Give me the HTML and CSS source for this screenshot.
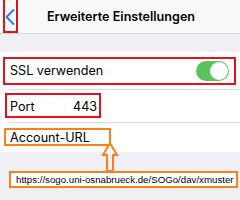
FILE: index.html
```html
<!DOCTYPE html>
<html lang="de">
<head>
<meta charset="utf-8">
<link rel="stylesheet" href="styles.css">
</head>
<body>
<div class="screen">
  <header class="nav">
    <span class="back">
      <svg width="10" height="16" viewBox="0 0 10 16"><path d="M8.5 1 L1.5 8 L8.5 15" fill="none" stroke="#157efb" stroke-width="1.8" stroke-linecap="round" stroke-linejoin="round"/></svg>
    </span>
    <h1 class="title">Erweiterte Einstellungen</h1>
  </header>
  <div class="gap"></div>
  <ul class="list">
    <li class="row row-ssl"><span class="label">SSL verwenden</span><span class="toggle"><span class="knob"></span></span></li>
    <li class="row row-port"><span class="label port-label">Port</span><span class="value">443</span></li>
    <li class="row row-url"><span class="label">Account-URL</span></li>
  </ul>

  <div class="mark mark-back"></div>
  <div class="mark mark-ssl"></div>
  <div class="mark mark-port"></div>
  <div class="mark mark-account"></div>
  <svg class="arrow" width="18" height="30" viewBox="0 0 18 30"><polygon points="9,1 16,13 12,13 12,29 6,29 6,13 2,13" fill="none" stroke="#f7821b" stroke-width="2" stroke-linejoin="miter"/></svg>
  <div class="urlbox">https://sogo.uni-osnabrueck.de/SOGo/dav/xmuster</div>
</div>
</body>
</html>
```
FILE: styles.css
```css
html, body {
  margin: 0;
  padding: 0;
}
body {
  background: #efeff4;
  font-family: Inter, "Liberation Sans", sans-serif;
  color: #000;
}
.screen {
  position: relative;
  width: 240px;
  height: 200px;
  overflow: hidden;
  background: #efeff4;
}
.nav {
  height: 33px;
  background: #f9f9f9;
  border-bottom: 1px solid #d6d6da;
  display: flex;
  align-items: center;
  position: relative;
}
.back {
  display: flex;
  align-items: center;
  padding-left: 5px;
  padding-top: 1px;
}
.title {
  margin: 0;
  position: absolute;
  left: 0;
  right: 0;
  text-align: center;
  font-size: 12.6px;
  font-weight: 600;
  letter-spacing: 0;
  padding-left: 2px;
}
.gap {
  height: 18px;
}
.list {
  list-style: none;
  margin: 0;
  padding: 0;
  background: #fff;
}
.row {
  display: flex;
  align-items: center;
  padding-left: 10px;
  font-size: 12.6px;
  position: relative;
}
.row-ssl {
  height: 37px;
  justify-content: space-between;
  padding-right: 11px;
}
.row-port {
  height: 32px;
}
.row-url {
  height: 29px;
}
.row-ssl::after,
.row-port::after {
  content: "";
  position: absolute;
  left: 9px;
  right: 0;
  bottom: -1px;
  height: 1px;
  background: #dcdce0;
}
.row-port, .row-url {
  margin-top: 1px;
}
.port-label {
  width: 63px;
}
.toggle {
  width: 33px;
  height: 20px;
  border-radius: 10px;
  background: #5cc25f;
  position: relative;
  margin-top: 0;
}
.knob {
  position: absolute;
  right: 1px;
  top: 1px;
  width: 18px;
  height: 18px;
  border-radius: 50%;
  background: #fff;
}
.mark {
  position: absolute;
  box-sizing: border-box;
  border: 2px solid #e8101a;
}
.mark-back {
  left: 3px;
  top: -2px;
  width: 15px;
  height: 35px;
}
.mark-ssl {
  left: 3px;
  top: 57px;
  width: 233px;
  height: 28px;
}
.mark-port {
  left: 5px;
  top: 93px;
  width: 96px;
  height: 25px;
}
.mark-account {
  left: 4px;
  top: 128px;
  width: 107px;
  height: 18px;
  border-color: #f7821b;
}
.arrow {
  position: absolute;
  left: 101px;
  top: 142px;
}
.urlbox {
  position: absolute;
  left: 9px;
  top: 171px;
  width: 229px;
  height: 17px;
  box-sizing: border-box;
  border: 2px solid #f7821b;
  background: #fff;
  font-family: "Liberation Sans", Arial, sans-serif;
  font-size: 9.7px;
  line-height: 13px;
  padding-left: 5px;
  white-space: nowrap;
  overflow: hidden;
}
```
